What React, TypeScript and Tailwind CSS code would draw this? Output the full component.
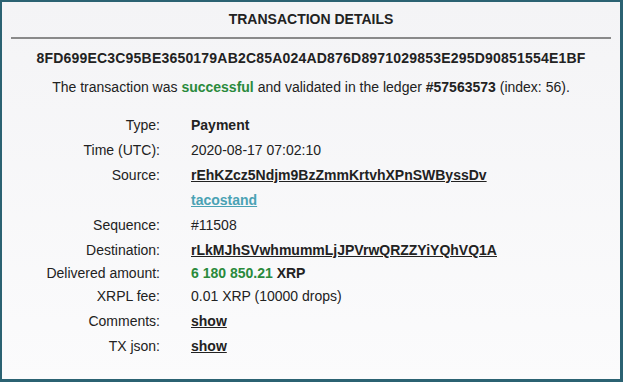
const rows: { label: string; value: React.ReactNode; h: string }[] = [
  { label: "Type:", value: <b>Payment</b>, h: "h-[25px]" },
  { label: "Time (UTC):", value: "2020-08-17 07:02:10", h: "h-[25px]" },
  {
    label: "Source:",
    value: <a className="font-bold underline">rEhKZcz5Ndjm9BzZmmKrtvhXPnSWByssDv</a>,
    h: "h-[25px]",
  },
  {
    label: "",
    value: <a className="font-bold text-[#4aa2b4] underline">tacostand</a>,
    h: "h-[25px]",
  },
  { label: "Sequence:", value: "#11508", h: "h-[25px]" },
  {
    label: "Destination:",
    value: <a className="font-bold underline">rLkMJhSVwhmummLjJPVrwQRZZYiYQhVQ1A</a>,
    h: "h-[25px]",
  },
  {
    label: "Delivered amount:",
    value: (
      <b>
        <span className="text-[#2a8a3c]">6 180 850.21</span> XRP
      </b>
    ),
    h: "h-[21px]",
  },
  { label: "XRPL fee:", value: "0.01 XRP (10000 drops)", h: "h-[25px]" },
  { label: "Comments:", value: <a className="font-bold underline">show</a>, h: "h-[25px]" },
  { label: "TX json:", value: <a className="font-bold underline">show</a>, h: "h-[25px]" },
];

export default function App() {
  return (
    <div className="h-[382px] w-[623px] bg-[#2b6272] pb-[3px] pl-[2px] pr-[3px] pt-[2px] font-['Liberation_Sans',Arial,sans-serif] text-[14px] text-[#222]">
      <div className="h-full bg-gradient-to-b from-[#f4f4f6] to-[#fbfbfc] px-[9px]">
        <h1 className="pt-[9px] text-center text-[14px] font-bold leading-[17px]">
          TRANSACTION DETAILS
        </h1>
        <div className="mt-[9px] h-[2px] bg-[#8a8a8a]" />
        <div className="mt-[11px] text-center font-bold leading-[17px] tracking-[0.2px]">
          8FD699EC3C95BE3650179AB2C85A024AD876D8971029853E295D90851554E1BF
        </div>
        <p className="mt-[12px] text-center leading-[17px]">
          The transaction was <b className="text-[#2a8a3c]">successful</b> and validated in the
          ledger <b>#57563573</b> (index: 56).
        </p>
        <div className="mt-[17px] grid grid-cols-[149px_1fr] gap-x-[31px]">
          {rows.map((r, i) => (
            <div key={i} className="contents">
              <div className={`${r.h} flex items-center justify-end`}>{r.label}</div>
              <div className={`${r.h} flex items-center`}>{r.value}</div>
            </div>
          ))}
        </div>
      </div>
    </div>
  );
}
